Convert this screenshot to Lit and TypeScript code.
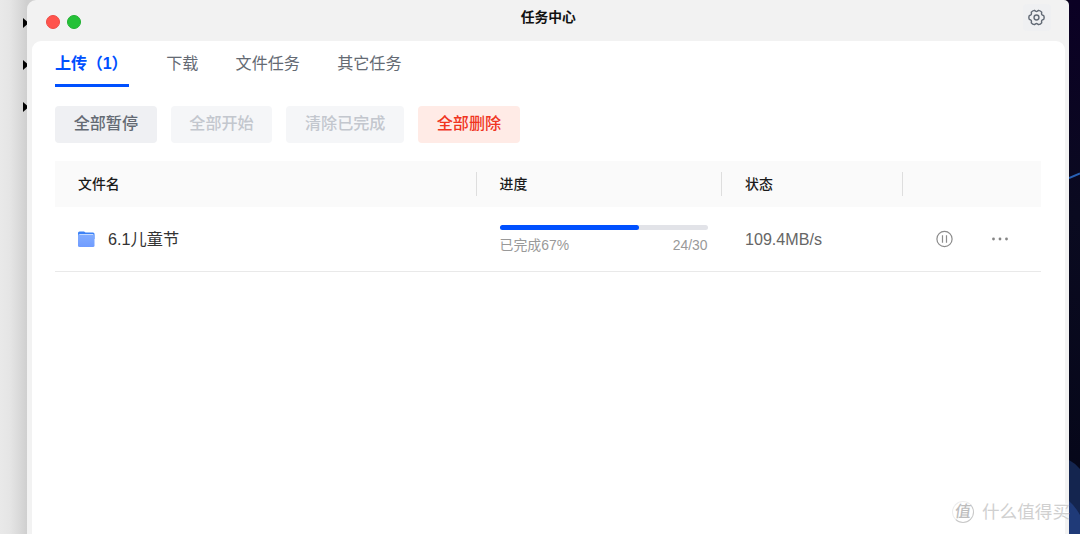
import { LitElement, html, css, svg } from "lit";
import { customElement, state } from "lit/decorators.js";
import { classMap } from "lit/directives/class-map.js";

interface Task { name: string; percent: number; done: number; total: number; speed: string; }

// Six-lobed gear outline centred on (9, 9): two lobe corners and two notch corners per sixth.
const polar = (r: number, deg: number) =>
  `${(9 + r * Math.cos((deg * Math.PI) / 180)).toFixed(2)} ${(9 + r * Math.sin((deg * Math.PI) / 180)).toFixed(2)}`;
const gearPath = "M" + [0, 60, 120, 180, 240, 300]
  .map((a) => `${polar(7.9, a - 14)}Q${polar(8.5, a)} ${polar(7.9, a + 14)}L${polar(6.8, a + 22)}Q${polar(6.1, a + 30)} ${polar(6.8, a + 38)}`)
  .join("L") + "Z";
const gear = svg`<svg class="gear" viewBox="0 0 18 18" fill="none" stroke="#626a75" stroke-width="1.5" stroke-linejoin="round">
  <path d=${gearPath}/>
  <circle cx="9" cy="9" r="2.6"/></svg>`;

@customElement("app-root")
export class AppRoot extends LitElement {
  static styles = css`
    :host { display: block; height: 534px; overflow: hidden; font-family: "Liberation Sans", "Noto Sans CJK SC", sans-serif; }
    * { box-sizing: border-box; }
    .desktop { position: relative; display: flex; width: 1080px; height: 534px; overflow: hidden; background: linear-gradient(90deg, #e9e9e9 0, #e5e5e5 10px, #dadada 19px, #cfcfcf 27px, #cfcfcf 40px, #08001a 41px); }
    .behind { width: 27px; flex: none; display: flex; flex-direction: column; align-items: flex-end; gap: 32px; padding-top: 18px; }
    .behind svg { display: block; width: 4px; height: 10px; }
    .wall { flex: none; width: 11px; height: 534px; display: block; }
    .window { width: 1042px; flex: none; height: 534px; background: #f2f2f2; border-radius: 9px 5px 0 0; padding: 0 4.500px 0 5px; display: flex; flex-direction: column; }
    .title { height: 40.500px; flex: none; display: grid; grid-template-columns: 1fr auto 1fr; padding: 0 14px; }
    .lights { display: flex; gap: 7px; padding-top: 15px; }
    .light { width: 14px; height: 14px; border-radius: 50%; background: #ff544d; border: 1px solid #ee4b45; }
    .light.green { background: #25c138; border-color: #1fb031; }
    .title-text { font-size: 13.800px; font-weight: 700; line-height: 20px; padding-top: 8px; color: #111; }
    .settings { justify-self: end; margin: 4px 0 0; width: 28px; height: 27px; border-radius: 4px; background: #eff0f2; display: flex; align-items: center; justify-content: center; }
    .gear { width: 17px; height: 17px; }
    .card { flex: 1; background: #fff; border-radius: 9px 9px 0 0; padding: 0 23.500px 0 23px; }
    .tabs { display: flex; gap: 37.200px; height: 46.500px; }
    .tab { font-size: 16.100px; line-height: 24px; padding-top: 10.500px; color: #646a73; border-bottom: 3px solid transparent; white-space: nowrap; }
    .tab.active { width: 74px; letter-spacing: -.2px; color: #0050ff; font-weight: 700; border-color: #0050ff; }
    .actions { display: flex; gap: 14px; padding-top: 18.500px; }
    .btn { height: 37px; padding: 0 18.650px; border-radius: 4px; font-size: 16.100px; line-height: 35px; font-weight: 500; background: #eff0f3; color: #646a73; white-space: nowrap; }
    .btn.off { background: #f5f6f8; color: #c3c7ce; }
    .btn.danger { background: #ffebe6; color: #f0351f; }
    .table { margin-top: 18.500px; }
    .cols { display: grid; grid-template-columns: 421.500px 245.500px 180.500px 1fr; }
    .head { height: 46px; background: #fafafa; align-items: center; }
    .th { height: 24px; line-height: 25px; font-size: 13.900px; font-weight: 500; color: #1b1b1b; padding-left: 23px; border-right: 1px solid #dedede; }
    .th:last-child { border: 0; }
    .row { height: 65px; grid-template-rows: 64px; border-bottom: 1px solid #e9e9e9; }
    .name { display: flex; align-items: center; gap: 12px; padding-left: 22px; font-size: 16.200px; line-height: 24px; color: #333; }
    .name span { padding-bottom: 1px; }
    .folder { width: 19px; height: 18px; display: block; }
    .progress { padding: 18px 14.500px 0 23px; }
    .track { height: 5px; border-radius: 3px; background: #e2e3e8; }
    .fill { height: 5px; border-radius: 3px; background: #0050ff; }
    .meta { display: flex; justify-content: space-between; font-size: 13.900px; line-height: 20px; padding-top: 5px; color: #999; }
    .speed { font-size: 16.100px; line-height: 64px; padding-left: 23px; color: #666; }
    .ops { display: flex; align-items: center; padding-left: 32px; gap: 37px; }
    .ops svg { display: block; width: 19px; height: 18px; }
    .mark { position: absolute; left: 952px; top: 500px; width: 118px; overflow: hidden; display: flex; align-items: center; gap: 8px; color: #d0d0d0; text-shadow: -1px -1px 0 #fff; font-size: 17.600px; line-height: 24px; white-space: nowrap; }
    .seal { flex: none; width: 22px; height: 22px; line-height: 19px; border-radius: 50%; text-align: center; font-size: 16px; font-weight: 500; color: #bdbdbd; border: 1px solid #ececec; border-right-color: #c8c8c8; border-bottom-color: #c8c8c8; }
    .glyph { display: block; transform: skewX(-8deg); }
  `;

  @state() private active = 0;
  private tabs = ["上传（1）", "下载", "文件任务", "其它任务"];
  private buttons = [
    { label: "全部暂停", kind: "" },
    { label: "全部开始", kind: "off" },
    { label: "清除已完成", kind: "off" },
    { label: "全部删除", kind: "danger" },
  ];
  private tasks: Task[] = [{ name: "6.1儿童节", percent: 67, done: 24, total: 30, speed: "109.4MB/s" }];

  private renderTask(t: Task) {
    return html`<div class="cols row">
      <div class="name">
        <svg class="folder" viewBox="0 0 19 18">
          <defs><linearGradient id="f" x2="0" y2="1"><stop stop-color="#82adff"/><stop offset="1" stop-color="#709cff"/></linearGradient></defs>
          <path d="M1 3Q1 1.500 2.500 1.500H7L8.500 2.500H16Q17.500 2.500 17.500 4V9H1Z" fill="#3c82f6"/>
          <rect x="1" y="4" width="16.500" height="13" rx="1.500" fill="url(#f)"/>
          <path d="M2.500 4.500H16" stroke="#c5daff"/>
        </svg>
        <span>${t.name}</span>
      </div>
      <div class="progress">
        <div class="track"><div class="fill" style="width:${t.percent}%"></div></div>
        <div class="meta"><span>已完成${t.percent}%</span><span>${t.done}/${t.total}</span></div>
      </div>
      <div class="speed">${t.speed}</div>
      <div class="ops">
        <svg viewBox="0 0 19 18" fill="none" stroke="#8c8c8c" stroke-width="1.200"><circle cx="9.500" cy="9" r="7.600"/><path d="M7.500 5.300v7.400M11.500 5.300v7.400"/></svg>
        <svg viewBox="0 0 19 18" fill="#858585"><circle cx="2.500" cy="9" r="1.400"/><circle cx="9" cy="9" r="1.400"/><circle cx="15.500" cy="9" r="1.400"/></svg>
      </div>
    </div>`;
  }

  render() {
    return html`<div class="desktop">
      <div class="behind">${[0, 1, 2].map(() => html`<svg viewBox="0 0 4 10"><path d="M0 0 4 3.500V6.500L0 10Z"/></svg>`)}</div>
      <div class="window">
        <div class="title">
          <div class="lights"><span class="light"></span><span class="light green"></span></div>
          <div class="title-text">任务中心</div>
          <div class="settings">${gear}</div>
        </div>
        <div class="card">
          <div class="tabs">${this.tabs.map((t, i) => html`<div class=${classMap({ tab: true, active: i === this.active })} @click=${() => (this.active = i)}>${t}</div>`)}</div>
          <div class="actions">${this.buttons.map((b) => html`<div class="btn ${b.kind}">${b.label}</div>`)}</div>
          <div class="table">
            <div class="cols head">${["文件名", "进度", "状态", ""].map((h) => html`<div class="th">${h}</div>`)}</div>
            ${this.tasks.map((t) => this.renderTask(t))}
          </div>
        </div>
      </div>
      <svg class="wall" viewBox="0 0 11 534">
        <defs><linearGradient id="w" x2="0" y2="1"><stop stop-color="#0b0024"/><stop offset=".4" stop-color="#0a0a20"/><stop offset="1" stop-color="#050618"/></linearGradient></defs>
        <rect width="11" height="534" fill="url(#w)"/>
        <path d="M0 178 11 173.500" stroke="#2860b4" stroke-width="2"/>
        <path d="M0 460Q6 463 11 469V534H0Z" fill="#14254f"/>
        <path d="M0 501Q6 506 11 515V534H0Z" fill="#1f3a78"/>
      </svg>
      <div class="mark"><span class="seal"><span class="glyph">值</span></span><span>什么值得买</span></div>
    </div>`;
  }
}
